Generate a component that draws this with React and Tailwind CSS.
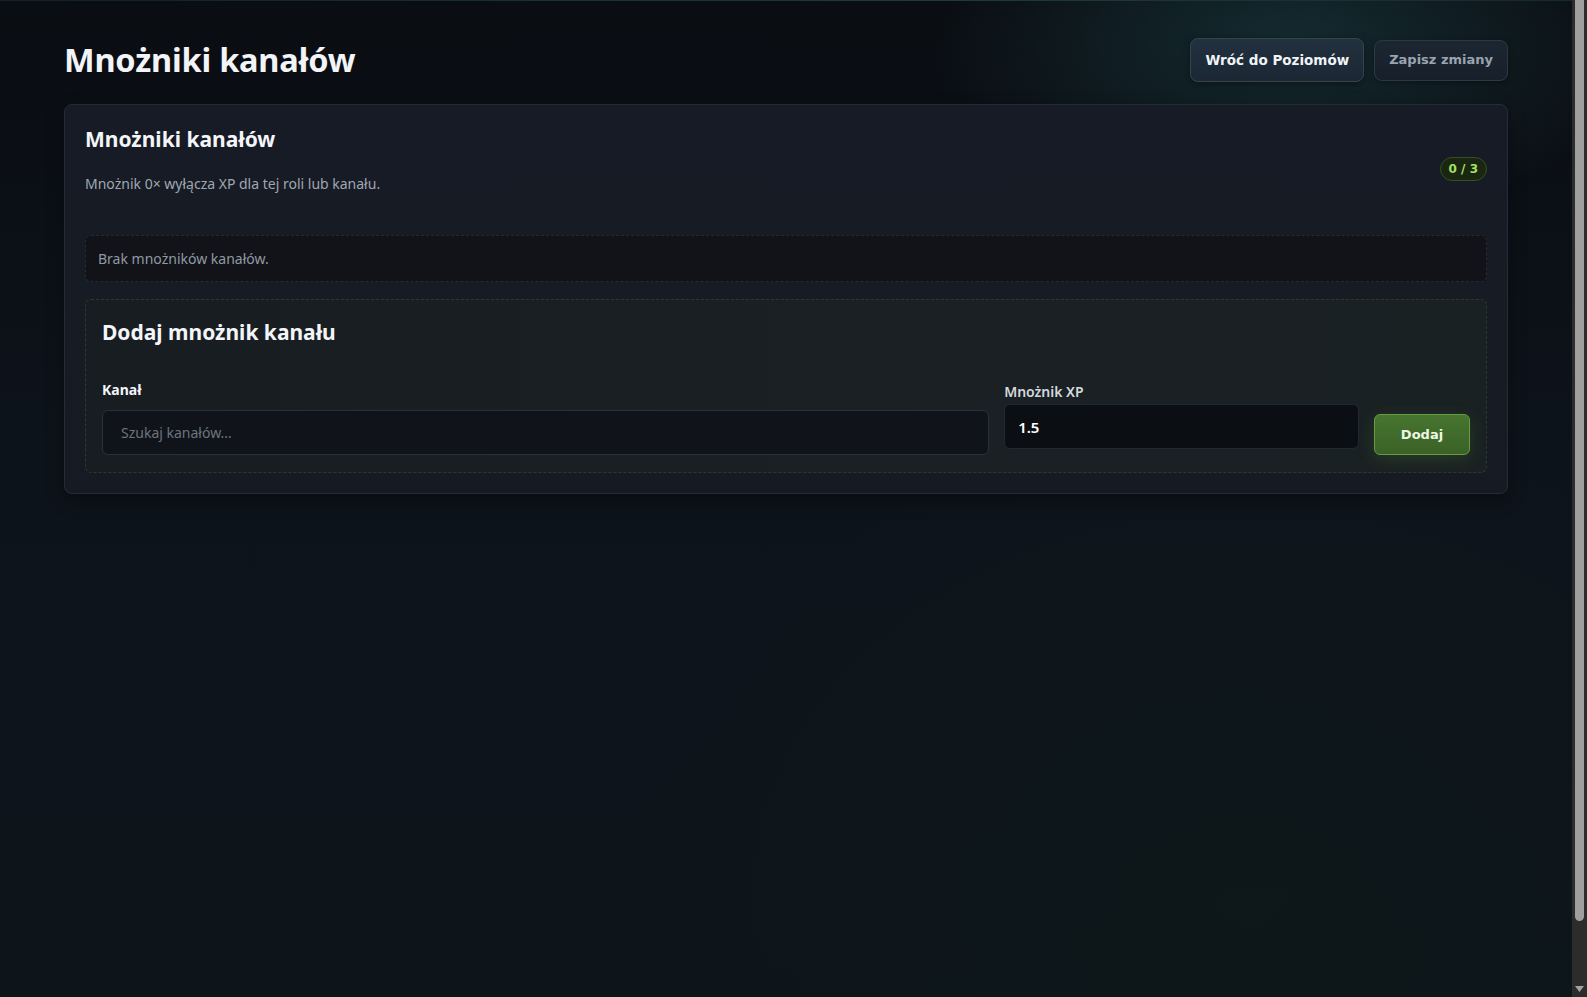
import React from "react";

const sans = "font-['Noto_Sans','Open_Sans',sans-serif]";
const wide = "font-['DejaVu_Sans','Verdana',sans-serif]";

function HeaderButton({ children, muted }) {
  return (
    <button
      type="button"
      className={
        muted
          ? `${wide} h-[41px] rounded-lg border border-[#2e3843] bg-[linear-gradient(180deg,#1c2631,#17202a)] px-[14px] text-[13px] font-bold text-[#9aa4b0] shadow-[0_2px_6px_rgba(0,0,0,0.35)]`
          : `${wide} h-[44px] rounded-lg border border-[#36434f] bg-[linear-gradient(180deg,#223140,#1b2733)] px-[14px] text-[13.5px] font-bold text-[#f1f4f7] shadow-[0_2px_8px_rgba(0,0,0,0.4)]`
      }
    >
      {children}
    </button>
  );
}

// Dark window scrollbar: track, thumb and the down arrow.
function ScrollBar() {
  return (
    <div className="flex w-[15px] shrink-0 flex-col bg-[#2c2c2c]">
      <div className="mx-auto h-[921px] w-[9px] rounded-b-full bg-[#9f9f9f]" />
      <div className="flex flex-1 items-end justify-center pb-[5px]">
        <svg width="9" height="6" viewBox="0 0 9 6" aria-hidden="true">
          <path d="M0 0h9L4.5 6z" fill="#a3a3a3" />
        </svg>
      </div>
    </div>
  );
}

export default function App() {
  return (
    <div className="flex h-screen overflow-hidden bg-[#0b0f15]">
      <div
        className={`${sans} relative min-w-0 flex-1 bg-[radial-gradient(ellipse_520px_260px_at_1290px_40px,rgba(32,78,82,0.45),transparent_70%),radial-gradient(ellipse_900px_700px_at_1250px_900px,rgba(14,28,26,0.5),transparent_70%),linear-gradient(180deg,#0a0d12_0%,#0d131b_45%,#0d141a_100%)] px-16 pt-[38px] text-white`}
      >
        <div className="absolute inset-x-0 top-0 h-px bg-[linear-gradient(90deg,#142027,#1d3a40_60%,#152a30)]" />

        {/* page header */}
        <div className="flex items-center justify-between">
          <h1 className="text-[32.5px] font-bold leading-[44px] tracking-[-0.2px] text-[#f2f4f7]">
            Mnożniki kanałów
          </h1>
          <div className="flex items-center gap-[10px]">
            <HeaderButton>Wróć do Poziomów</HeaderButton>
            <HeaderButton muted>Zapisz zmiany</HeaderButton>
          </div>
        </div>

        {/* multipliers card */}
        <section className="mt-[22px] rounded-lg border border-[#262c37] bg-[linear-gradient(180deg,#171b25,#161b23)] p-5 shadow-[0_6px_18px_rgba(0,0,0,0.35)]">
          <div className="mb-[41px] flex items-start justify-between">
            <div>
              <h2 className="text-[21px] font-bold leading-[28px] text-[#f3f5f8]">
                Mnożniki kanałów
              </h2>
              <p className="mt-[21px] text-[14px] leading-[20px] text-[#a0a7b1]">
                Mnożnik 0× wyłącza XP dla tej roli lub kanału.
              </p>
            </div>
            <span
              className={`${wide} mt-[32px] flex h-[24px] items-center rounded-full border border-[#34501f] bg-[#1a2612] px-[8px] text-[12px] font-bold text-[#a3e163]`}
            >
              0 / 3
            </span>
          </div>

          {/* empty list */}
          <div className="flex h-[47px] items-center rounded-md border border-dashed border-[#252a34] bg-[#111319] px-[12px] text-[14px] text-[#9199a3]">
            Brak mnożników kanałów.
          </div>

          {/* add form */}
          <div className="mt-[17px] rounded-md border border-dashed border-[#2b3a2b] bg-[linear-gradient(90deg,#181d22,#1a2024_60%,#1a2123)] p-[16px] pb-[17px]">
            <h3 className="pt-[2px] text-[21px] font-bold leading-[28px] text-[#f3f5f8]">
              Dodaj mnożnik kanału
            </h3>
            <div className="mt-[34px] grid grid-cols-[2.5fr_1fr_auto] items-start gap-[15px]">
              <div>
                <label className="block text-[14px] font-bold leading-[20px] text-[#f3f5f8]">
                  Kanał
                </label>
                <input
                  type="text"
                  placeholder="Szukaj kanałów..."
                  className="mt-[10px] h-[45px] w-full rounded-md border border-[#2a303a] bg-[#10131a] px-[18px] text-[14px] text-white outline-none placeholder:text-[#6c737e]"
                />
              </div>
              <div className="pt-[2px]">
                <label className="block text-[14px] font-semibold leading-[20px] text-[#d5d9df]">
                  Mnożnik XP
                </label>
                <input
                  type="text"
                  defaultValue="1.5"
                  className="mt-[2px] h-[45px] w-full rounded-md border border-[#222831] bg-[#0b0e13] px-[13px] text-[15px] font-semibold text-white outline-none"
                />
              </div>
              <button
                type="button"
                className={`${wide} mt-[34px] h-[41px] w-[96px] rounded-md border border-[#689a45] bg-[linear-gradient(180deg,#47752f,#3a6226)] text-[13px] font-bold text-[#eef7e4] shadow-[0_4px_16px_rgba(90,150,50,0.22)]`}
              >
                Dodaj
              </button>
            </div>
          </div>
        </section>
      </div>
      <ScrollBar />
    </div>
  );
}
